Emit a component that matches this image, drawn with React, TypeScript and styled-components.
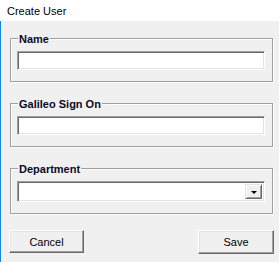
import styled, { createGlobalStyle } from "styled-components";

const GlobalStyle = createGlobalStyle`
  html, body {
    margin: 0;
    padding: 0;
    background: #f0f0f0;
  }
  body {
    font-family: "Liberation Sans", Arial, sans-serif;
    font-size: 11px;
    color: #000;
  }
`;

const Window = styled.div`
  width: 279px;
  height: 262px;
  display: flex;
  flex-direction: column;
  overflow: hidden;
`;

const TitleBar = styled.div`
  height: 21px;
  flex-shrink: 0;
  background: #fff;
  padding-left: 7px;
  display: flex;
  align-items: center;
  font-size: 11px;
`;

const Body = styled.div`
  flex: 1;
  background: #f0f0f0;
  border-left: 1px solid #1883d7;
  padding: 10px 6px 0 9px;
  display: flex;
  flex-direction: column;
`;

const Group = styled.fieldset<{ $gap?: number }>`
  margin: ${({ $gap }) => $gap ?? 0}px 0 0 0;
  padding: 5px 7px 11px 6px;
  min-width: 0;
  border: 1px solid #a0a0a0;
  box-shadow: inset 1px 1px 0 #fff, 1px 1px 0 #fff;
`;

const Legend = styled.legend`
  padding: 2px 1px 0;
  margin-left: 1px;
  font-weight: bold;
  font-size: 11px;
  line-height: 13px;
  color: #0a0a1e;
`;

const TextBox = styled.input`
  display: block;
  box-sizing: border-box;
  width: 100%;
  height: 19px;
  margin: 0;
  padding: 0 3px;
  background: #fff;
  border: 1px solid;
  border-color: #a0a0a0 #fff #fff #a0a0a0;
  box-shadow: inset 1px 1px 0 #696969, inset -1px -1px 0 #e3e3e3;
  outline: none;
  font: inherit;
`;

const Combo = styled.div`
  box-sizing: border-box;
  height: 21px;
  display: flex;
  justify-content: flex-end;
  padding: 2px;
  background: #fff;
  border: 1px solid;
  border-color: #a0a0a0 #fff #fff #a0a0a0;
  box-shadow: inset 1px 1px 0 #696969, inset -1px -1px 0 #e3e3e3;
`;

const ComboButton = styled.div`
  box-sizing: border-box;
  width: 17px;
  height: 100%;
  background: #f0f0f0;
  border: 1px solid;
  border-color: #e3e3e3 #696969 #696969 #e3e3e3;
  box-shadow: inset 1px 1px 0 #fff, inset -1px -1px 0 #a0a0a0;
  display: flex;
  align-items: center;
  justify-content: center;
`;

const Arrow = styled.span`
  width: 0;
  height: 0;
  border-left: 3px solid transparent;
  border-right: 3px solid transparent;
  border-top: 3px solid #000;
  margin-top: 1px;
`;

const ButtonRow = styled.div`
  margin: 16px -1px 0 -1px;
  display: flex;
  justify-content: space-between;
`;

const Button = styled.button<{ $width: number; $height: number }>`
  box-sizing: border-box;
  width: ${({ $width }) => $width}px;
  height: ${({ $height }) => $height}px;
  margin: 0;
  padding: 0;
  background: #f0f0f0;
  border: 1px solid;
  border-color: #fff #696969 #696969 #fff;
  box-shadow: inset -1px -1px 0 #a0a0a0, inset 1px 1px 0 #e3e3e3;
  font-family: "Liberation Sans", Arial, sans-serif;
  font-size: 11px;
  color: #000;
`;

export default function App() {
  return (
    <>
      <GlobalStyle />
      <Window>
        <TitleBar>Create User</TitleBar>
        <Body>
          <Group>
            <Legend>Name</Legend>
            <TextBox />
          </Group>
          <Group $gap={14}>
            <Legend>Galileo Sign On</Legend>
            <TextBox />
          </Group>
          <Group $gap={14}>
            <Legend>Department</Legend>
            <Combo>
              <ComboButton>
                <Arrow />
              </ComboButton>
            </Combo>
          </Group>
          <ButtonRow>
            <Button $width={75} $height={23}>Cancel</Button>
            <Button $width={76} $height={24}>Save</Button>
          </ButtonRow>
        </Body>
      </Window>
    </>
  );
}
